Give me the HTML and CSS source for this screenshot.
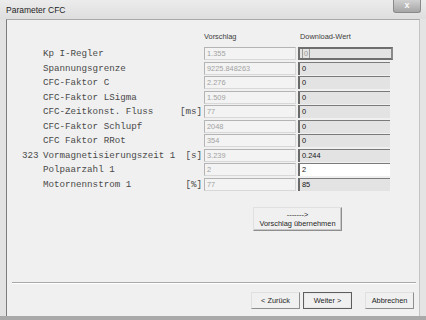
FILE: index.html
```html
<!DOCTYPE html>
<html lang="de">
<head>
    <meta charset="UTF-8">
    <meta name="viewport" content="width=device-width, initial-scale=1.0">
    <title>Parameter CFC</title>
    <link rel="stylesheet" href="styles.css">
</head>
<body>
    <div class="window">
        <!-- Title bar -->
        <div class="titlebar">
            <span class="title">Parameter CFC</span>
            <span class="close">x</span>
        </div>

        <div class="client">
            <!-- Parameter table -->
            <div class="params">
                <div class="head"></div>
                <div class="head"></div>
                <div class="head"></div>
                <div class="head">Vorschlag</div>
                <div class="head dl">Download-Wert</div>

                <div class="num"></div><div class="name">Kp I-Regler</div><div class="unit"></div>
                <div class="cell"><span class="field off">1.355</span></div>
                <div class="cell"><span class="field ro focus"><span class="sel">0</span></span></div>

                <div class="num"></div><div class="name">Spannungsgrenze</div><div class="unit"></div>
                <div class="cell"><span class="field off">9225.848263</span></div>
                <div class="cell"><span class="field ro">0</span></div>

                <div class="num"></div><div class="name">CFC-Faktor C</div><div class="unit"></div>
                <div class="cell"><span class="field off">2.276</span></div>
                <div class="cell"><span class="field ro">0</span></div>

                <div class="num"></div><div class="name">CFC-Faktor LSigma</div><div class="unit"></div>
                <div class="cell"><span class="field off">1.509</span></div>
                <div class="cell"><span class="field ro">0</span></div>

                <div class="num"></div><div class="name">CFC-Zeitkonst. Fluss</div><div class="unit">[ms]</div>
                <div class="cell"><span class="field off">77</span></div>
                <div class="cell"><span class="field ro">0</span></div>

                <div class="num"></div><div class="name">CFC-Faktor Schlupf</div><div class="unit"></div>
                <div class="cell"><span class="field off">2048</span></div>
                <div class="cell"><span class="field ro">0</span></div>

                <div class="num"></div><div class="name">CFC Faktor RRot</div><div class="unit"></div>
                <div class="cell"><span class="field off">354</span></div>
                <div class="cell"><span class="field ro">0</span></div>

                <div class="num">323</div><div class="name">Vormagnetisierungszeit 1</div><div class="unit">[s]</div>
                <div class="cell"><span class="field off">3.239</span></div>
                <div class="cell"><span class="field ro">0.244</span></div>

                <div class="num"></div><div class="name">Polpaarzahl 1</div><div class="unit"></div>
                <div class="cell"><span class="field off">2</span></div>
                <div class="cell"><span class="field edit">2</span></div>

                <div class="num"></div><div class="name">Motornennstrom 1</div><div class="unit">[%]</div>
                <div class="cell"><span class="field off">77</span></div>
                <div class="cell"><span class="field ro">85</span></div>
            </div>

            <!-- Copy suggestion -->
            <div class="apply-row">
                <button class="btn apply">-------&gt;<br>Vorschlag übernehmen</button>
            </div>

            <hr class="sep">

            <!-- Wizard buttons -->
            <div class="footer">
                <button class="btn nav">&lt; Zurück</button>
                <button class="btn nav default">Weiter &gt;</button>
                <button class="btn nav cancel">Abbrechen</button>
            </div>
        </div>
    </div>
</body>
</html>
```

FILE: styles.css
```css
/* Basic Reset */
body, hr, button {
    margin: 0;
    padding: 0;
    box-sizing: border-box;
}

* {
    box-sizing: border-box;
}

body {
    width: 426px;
    height: 320px;
    overflow: hidden;
    font-family: "Liberation Sans", Arial, sans-serif;
    background-color: #d6d6d6;
}

/* Window frame */
.window {
    width: 426px;
    height: 320px;
    display: flex;
    flex-direction: column;
    background: linear-gradient(to right, #e2e2e2, #d9d9d9 40%, #e4e4e4);
    border-bottom: 4px solid #a9a9a9;
}

.titlebar {
    height: 19px;
    display: flex;
    align-items: flex-start;
    justify-content: space-between;
    padding: 0 5px 0 6px;
    background: linear-gradient(to bottom, #ececec, #dedede);
}

.title {
    font-size: 8.5px;
    color: #1e1e1e;
    margin-top: 5px;
}

.close {
    width: 28px;
    height: 13px;
    border: 1px solid #8a8a8a;
    border-top: none;
    border-radius: 0 0 3px 3px;
    background: linear-gradient(to bottom, #d0d0d0, #a6a6a6);
    color: #fafafa;
    font-size: 9px;
    font-weight: bold;
    line-height: 11px;
    text-align: center;
}

/* Dialog client area */
.client {
    flex: 1;
    margin: 0 6px 0 6px;
    display: flex;
    flex-direction: column;
    background-color: #f0f0f0;
    border-left: 1px solid #7c7c7c;
    border-top: 1px solid #a8a8a8;
    border-right: 1px solid #c4c4c4;
}

.params {
    display: grid;
    grid-template-columns: 21px 1fr auto 94px 95px;
    grid-template-rows: 13.5px;
    grid-auto-rows: 13px;
    row-gap: 1.5px;
    width: 371px;
    margin: 12px 0 0 15px;
}

.head {
    font-size: 7.4px;
    line-height: 10px;
    color: #3c3c3c;
}

.head.dl {
    padding-left: 2px;
}

.num, .name, .unit {
    font-family: "Liberation Mono", "Courier New", monospace;
    font-size: 9.2px;
    line-height: 13px;
    color: #4a4a4a;
    white-space: nowrap;
}

.unit {
    text-align: right;
    padding-right: 2px;
}

.cell {
    display: flex;
}

/* Edit fields */
.field {
    display: block;
    width: 92px;
    height: 13px;
    padding-left: 2px;
    font-size: 7.4px;
    line-height: 11px;
    white-space: nowrap;
    overflow: hidden;
}

.field.off {
    color: #a2a2a2;
    background-color: #f3f3f3;
    border: 1px solid #b4b4b4;
    border-right-color: #d8d8d8;
    border-bottom-color: #d8d8d8;
}

.field.ro {
    color: #161616;
    background-color: #e3e3e3;
    border-top: 1px solid #7a7a7a;
    border-left: 2px solid #6a6a6a;
}

.field.edit {
    color: #161616;
    background-color: #ffffff;
    border-top: 1px solid #7a7a7a;
    border-left: 2px solid #6a6a6a;
}

.field.focus {
    width: 95px;
    border: 2px solid #6e6e6e;
    border-right-color: #8a8a8a;
    line-height: 9px;
    padding-left: 3px;
}

.sel {
    outline: 1px solid #9a9a9a;
    color: #9a9a9a;
    padding: 0 1px;
}

/* Buttons */
.btn {
    font-family: "Liberation Sans", Arial, sans-serif;
    font-size: 7.4px;
    color: #1e1e1e;
    background-color: #f0f0f0;
    border: 1px solid #e0e0e0;
    border-right-color: #8e8e8e;
    border-bottom-color: #8e8e8e;
    cursor: pointer;
}

.apply-row {
    display: flex;
    margin: 16px 0 0 246px;
}

.apply {
    width: 89px;
    height: 24px;
    line-height: 9px;
    padding-top: 1px;
    box-shadow: inset -1px -1px 0 #c8c8c8;
}

.sep {
    border: none;
    border-top: 1px solid #a8a8a8;
    border-bottom: 1px solid #ffffff;
    margin: 51px 3px 0 5px;
}

.footer {
    display: flex;
    justify-content: flex-end;
    gap: 3px;
    margin-top: 8px;
    padding-right: 5px;
}

.nav {
    width: 49px;
    height: 17px;
}

.nav.default {
    border: 1px solid #5e5e5e;
    box-shadow: inset 0 0 0 1px #e8e8e8;
}

.nav.cancel {
    margin-left: 10px;
}
```
